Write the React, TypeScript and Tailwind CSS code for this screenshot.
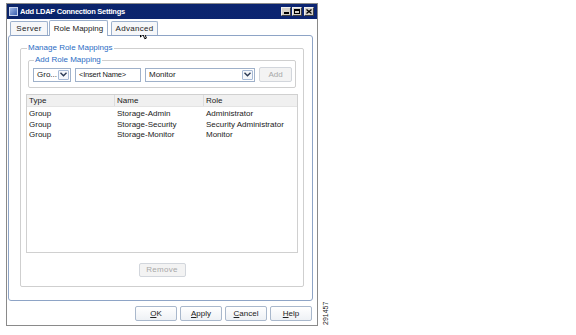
import React from 'react'

const font = { fontFamily: '"Liberation Sans", Arial, sans-serif' }

const ChevronBox = () => (
  <div className="w-[11px] h-[10px] border border-[#a7bad6] rounded-[1px] bg-[#f4f7fb] flex items-center justify-center">
    <svg width="7" height="5" viewBox="0 0 7 5">
      <path d="M0.5 0.8 L3.5 3.8 L6.5 0.8" stroke="#2b3a55" strokeWidth="1.4" fill="none" />
    </svg>
  </div>
)

const Combo = ({ text, w }: { text: string; w: string }) => (
  <div className={`${w} h-[14px] border border-[#9fb1ca] bg-white flex items-center justify-between pl-[3px] pr-[1px]`}>
    <span className="text-[8px] text-[#222] leading-none">{text}</span>
    <ChevronBox />
  </div>
)

const WinButton = ({ children }: { children: React.ReactNode }) => (
  <div className="w-[42px] h-[15px] border border-[#a9b8cc] rounded-[2px] bg-gradient-to-b from-white to-[#eef1f5] flex items-center justify-center text-[8px] text-[#222] leading-none">
    {children}
  </div>
)

const rows = [
  ['Group', 'Storage-Admin', 'Administrator'],
  ['Group', 'Storage-Security', 'Security Administrator'],
  ['Group', 'Storage-Monitor', 'Monitor'],
]

export default function App() {
  return (
    <div className="w-[576px] h-[335px] bg-white relative flex" style={font}>
      <div className="ml-[6px] mt-[3px] w-[312px] h-[323px] border border-[#8a8a8a] flex flex-col bg-white">
        {/* title bar */}
        <div className="h-[15px] bg-gradient-to-r from-[#0a246a] to-[#0c2572] flex items-center pl-[2px] pr-[3px]">
          <div className="w-[9px] h-[9px] bg-gradient-to-br from-[#9fb6e4] to-[#3a5fb0] border border-[#c8d4ee] mr-[2px]" />
          <span className="text-[7.5px] font-bold text-white leading-none tracking-[-0.25px]">Add LDAP Connection Settings</span>
          <div className="ml-auto flex gap-[1px]">
            <div className="w-[10px] h-[9px] bg-[#d4d0c8] border border-[#f0f0f0] border-r-[#404040] border-b-[#404040] flex items-end justify-center pb-[1px]">
              <div className="w-[5px] h-[2px] bg-black" />
            </div>
            <div className="w-[10px] h-[9px] bg-[#d4d0c8] border border-[#f0f0f0] border-r-[#404040] border-b-[#404040] flex items-center justify-center">
              <div className="w-[6px] h-[5px] border border-black border-t-2" />
            </div>
            <div className="w-[10px] h-[9px] bg-[#d4d0c8] border border-[#f0f0f0] border-r-[#404040] border-b-[#404040] flex items-center justify-center ml-[1px]">
              <svg width="6" height="5" viewBox="0 0 6 5">
                <path d="M0.5 0.5 L5.5 4.5 M5.5 0.5 L0.5 4.5" stroke="black" strokeWidth="1.3" />
              </svg>
            </div>
          </div>
        </div>

        <div className="flex-1 flex flex-col pl-[1px] pr-[4px]">
          {/* tabs */}
          <div className="h-[16px] flex items-end pl-[2px] relative z-10">
            <div className="w-[38px] h-[14px] border border-b-0 border-[#9db1cd] rounded-t-[2px] bg-[#f6f7f9] text-[8px] text-[#222] flex items-center justify-center leading-none tracking-[0.3px]">Server</div>
            <div className="w-[59px] h-[16px] ml-[1px] border border-b-0 border-[#9db1cd] rounded-t-[2px] bg-white text-[8px] text-[#222] flex items-center justify-center leading-none -mb-[1px]">Role Mapping</div>
            <div className="w-[47px] h-[14px] ml-[3px] border border-b-0 border-[#9db1cd] rounded-t-[2px] bg-[#f6f7f9] text-[8px] text-[#222] flex items-center justify-center leading-none tracking-[0.3px]">Advanced</div>
          </div>

          {/* tab panel */}
          <div className="flex-1 border border-[#8ea4c6] rounded-[3px] bg-white pl-[11px] pr-[12px] pt-[7px] pb-[13px] flex">
            <fieldset className="flex-1 border border-[#cfcfcf] rounded-[2px] px-[5px] pb-[9px] flex flex-col">
              <legend className="text-[8px] text-[#2a6cc4] leading-[10px] px-[1px] ml-[1px]">Manage Role Mappings</legend>
              <fieldset className="mx-[2px] mt-[2px] border border-[#cfcfcf] rounded-[2px] pl-[4px] pr-[3px] pb-[5px]">
                <legend className="text-[8px] text-[#2a6cc4] leading-[10px] px-[1px] ml-[1px]">Add Role Mapping</legend>
                <div className="flex items-center gap-[4px] mt-[2px]">
                  <Combo text="Gro..." w="w-[38px]" />
                  <div className="w-[66px] h-[14px] border border-[#9fb1ca] bg-white flex items-center pl-[3px] text-[7.5px] text-[#222] leading-none tracking-[-0.2px]">&lt;Insert Name&gt;</div>
                  <Combo text="Monitor" w="w-[110px]" />
                  <div className="w-[33px] h-[15px] border border-[#d2d6dc] rounded-[2px] bg-[#f3f3f3] flex items-center justify-center text-[8px] text-[#a8a8a8] leading-none">Add</div>
                </div>
              </fieldset>

              {/* table */}
              <div className="mt-[6px] h-[159px] border border-[#d0d0d0] bg-white flex flex-col">
                <div className="h-[12px] bg-[#f0f0f0] border-b border-[#e4e4e4] flex text-[8px] text-[#222] leading-none">
                  <div className="w-[88px] pl-[2px] flex items-center border-r border-[#dcdcdc]">Type</div>
                  <div className="w-[89px] pl-[2px] flex items-center border-r border-[#dcdcdc]">Name</div>
                  <div className="flex-1 pl-[2px] flex items-center">Role</div>
                </div>
                <div className="pt-[2px]">
                  {rows.map(r => (
                    <div key={r[1]} className="h-[10.5px] flex items-center text-[8px] text-[#222] leading-none">
                      <div className="w-[88px] pl-[2px]">{r[0]}</div>
                      <div className="w-[89px] pl-[2px]">{r[1]}</div>
                      <div className="flex-1 pl-[2px]">{r[2]}</div>
                    </div>
                  ))}
                </div>
              </div>

              <div className="flex-1 flex items-end justify-center">
                <div className="w-[47px] h-[14px] border border-[#d2d6dc] rounded-[2px] bg-[#f3f3f3] flex items-center justify-center text-[8px] text-[#a8a8a8] leading-none tracking-[0.3px]">Remove</div>
              </div>
            </fieldset>
          </div>

          {/* footer */}
          <div className="h-[24px] flex items-center justify-end gap-[3px] pr-[1px] pt-[1px]">
            <WinButton><span className="underline">O</span>K</WinButton>
            <WinButton><span className="underline">A</span>pply</WinButton>
            <WinButton><span className="underline">C</span>ancel</WinButton>
            <WinButton><span className="underline">H</span>elp</WinButton>
          </div>
        </div>
      </div>

      {/* mouse cursor over Advanced tab */}
      <svg className="absolute left-[140px] top-[26px]" width="9" height="14" viewBox="0 0 9 14">
        <path d="M0.5 0.5 L0.5 11 L3 8.6 L4.8 12.8 L6.4 12.1 L4.7 8 L8 8 Z" fill="white" stroke="black" strokeWidth="1" />
      </svg>

      {/* figure number */}
      <div className="absolute left-[322px] top-[325px] origin-top-left -rotate-90 text-[7px] text-[#222] leading-none whitespace-nowrap">291457</div>
    </div>
  )
}
